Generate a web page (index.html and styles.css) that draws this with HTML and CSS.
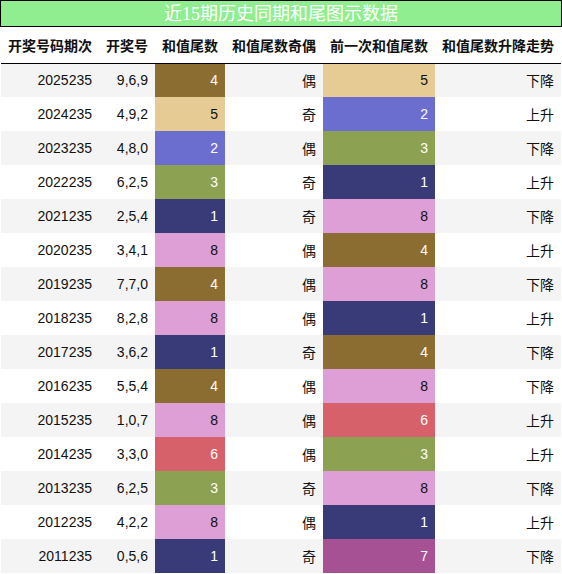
FILE: index.html
```html
<!DOCTYPE html>
<html lang="zh-CN">
<head>
    <meta charset="UTF-8">
    <meta name="viewport" content="width=device-width, initial-scale=1.0">
    <title>近15期历史同期和尾图示数据</title>
    <link rel="stylesheet" href="styles.css">
</head>
<body>
    <div class="title">近15期历史同期和尾图示数据</div>
    <table class="data-table">
        <thead>
            <tr>
                <th>开奖号码期次</th>
                <th>开奖号</th>
                <th>和值尾数</th>
                <th>和值尾数奇偶</th>
                <th>前一次和值尾数</th>
                <th>和值尾数升降走势</th>
            </tr>
        </thead>
        <tbody>
            <tr><td>2025235</td><td>9,6,9</td><td class="d4">4</td><td>偶</td><td class="d5">5</td><td>下降</td></tr>
            <tr><td>2024235</td><td>4,9,2</td><td class="d5">5</td><td>奇</td><td class="d2">2</td><td>上升</td></tr>
            <tr><td>2023235</td><td>4,8,0</td><td class="d2">2</td><td>偶</td><td class="d3">3</td><td>下降</td></tr>
            <tr><td>2022235</td><td>6,2,5</td><td class="d3">3</td><td>奇</td><td class="d1">1</td><td>上升</td></tr>
            <tr><td>2021235</td><td>2,5,4</td><td class="d1">1</td><td>奇</td><td class="d8">8</td><td>下降</td></tr>
            <tr><td>2020235</td><td>3,4,1</td><td class="d8">8</td><td>偶</td><td class="d4">4</td><td>上升</td></tr>
            <tr><td>2019235</td><td>7,7,0</td><td class="d4">4</td><td>偶</td><td class="d8">8</td><td>下降</td></tr>
            <tr><td>2018235</td><td>8,2,8</td><td class="d8">8</td><td>偶</td><td class="d1">1</td><td>上升</td></tr>
            <tr><td>2017235</td><td>3,6,2</td><td class="d1">1</td><td>奇</td><td class="d4">4</td><td>下降</td></tr>
            <tr><td>2016235</td><td>5,5,4</td><td class="d4">4</td><td>偶</td><td class="d8">8</td><td>下降</td></tr>
            <tr><td>2015235</td><td>1,0,7</td><td class="d8">8</td><td>偶</td><td class="d6">6</td><td>上升</td></tr>
            <tr><td>2014235</td><td>3,3,0</td><td class="d6">6</td><td>偶</td><td class="d3">3</td><td>上升</td></tr>
            <tr><td>2013235</td><td>6,2,5</td><td class="d3">3</td><td>奇</td><td class="d8">8</td><td>下降</td></tr>
            <tr><td>2012235</td><td>4,2,2</td><td class="d8">8</td><td>偶</td><td class="d1">1</td><td>上升</td></tr>
            <tr><td>2011235</td><td>0,5,6</td><td class="d1">1</td><td>奇</td><td class="d7">7</td><td>下降</td></tr>
        </tbody>
    </table>
</body>
</html>
```
FILE: styles.css
```css
* {
    margin: 0;
    padding: 0;
    box-sizing: border-box;
}

body {
    background: #fff;
    font-family: "Liberation Sans", "Noto Sans CJK SC", sans-serif;
    color: #111;
}

.title {
    height: 27px;
    line-height: 26px;
    background: #90ee90;
    border: 1px solid #000;
    color: #fff;
    text-align: center;
    font-family: "Liberation Serif", "Noto Sans CJK SC", serif;
    font-size: 18px;
}

.data-table {
    margin-left: 1px;
    border-collapse: collapse;
    font-size: 14px;
}

.data-table th {
    height: 36px;
    padding: 1px 7px 0;
    font-weight: bold;
    white-space: nowrap;
    border-bottom: 1px solid #000;
}

.data-table td {
    height: 34px;
    padding: 0 7px;
    text-align: right;
    white-space: nowrap;
}

.data-table tbody tr:nth-child(odd) {
    background: #f4f4f4;
}

/* tail digit colours */
.d1 { background: #393b79; color: #fff; }
.d2 { background: #6b6ecf; color: #fff; }
.d3 { background: #8ca252; color: #fff; }
.d4 { background: #8c6d31; color: #fff; }
.d5 { background: #e7cb94; color: #111; }
.d6 { background: #d6616b; color: #fff; }
.d7 { background: #a55194; color: #fff; }
.d8 { background: #de9ed6; color: #111; }
```
